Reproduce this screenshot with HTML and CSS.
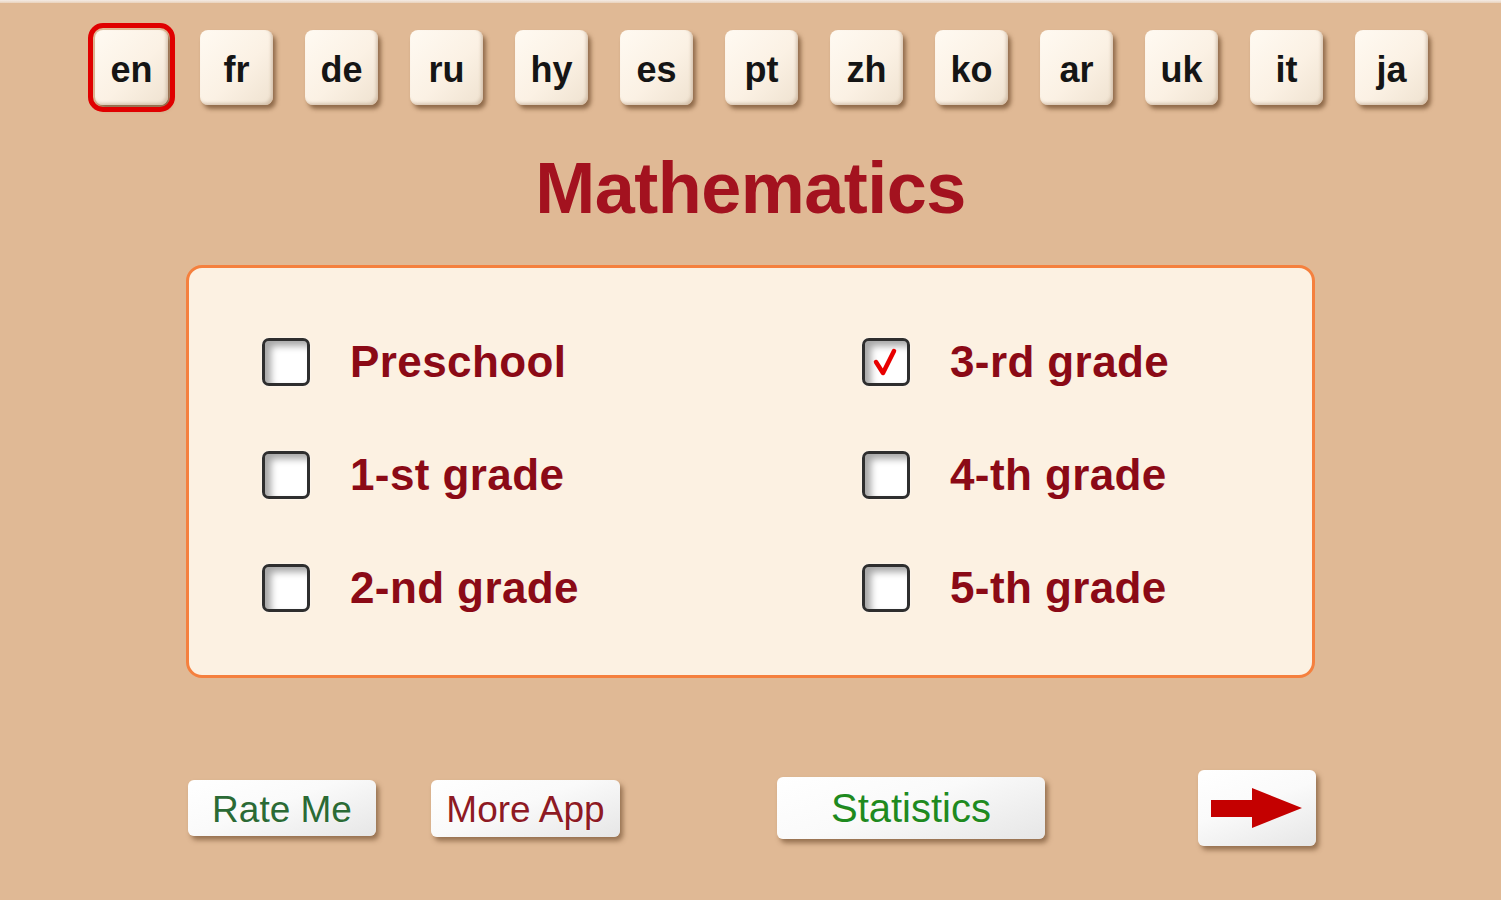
FILE: index.html
```html
<!DOCTYPE html>
<html lang="en">
<head>
<meta charset="utf-8">
<title>Mathematics</title>
<link rel="stylesheet" href="styles.css">
</head>
<body>
<div class="topbar"></div>
<div class="langs">
  <button class="lang active">en</button>
  <button class="lang">fr</button>
  <button class="lang">de</button>
  <button class="lang">ru</button>
  <button class="lang">hy</button>
  <button class="lang">es</button>
  <button class="lang">pt</button>
  <button class="lang">zh</button>
  <button class="lang">ko</button>
  <button class="lang">ar</button>
  <button class="lang">uk</button>
  <button class="lang">it</button>
  <button class="lang">ja</button>
</div>
<h1 class="title">Mathematics</h1>
<div class="panel">
  <div class="grades">
    <div class="grade"><span class="box"></span><span class="label">Preschool</span></div>
    <div class="grade"><span class="box"><svg viewBox="0 0 42 42" width="42" height="42"><polyline points="11,21 18,32 29,10" fill="none" stroke="#e80000" stroke-width="4.5" stroke-linecap="round" stroke-linejoin="round"/></svg></span><span class="label">3-rd grade</span></div>
    <div class="grade"><span class="box"></span><span class="label">1-st grade</span></div>
    <div class="grade"><span class="box"></span><span class="label">4-th grade</span></div>
    <div class="grade"><span class="box"></span><span class="label">2-nd grade</span></div>
    <div class="grade"><span class="box"></span><span class="label">5-th grade</span></div>
  </div>
</div>
<div class="actions">
  <button class="btn rate">Rate Me</button>
  <button class="btn more">More App</button>
  <button class="btn stats">Statistics</button>
  <button class="btn next"><svg viewBox="0 0 118 76" width="118" height="76"><polygon points="13,30 54,30 54,18 104,38 54,58 54,47 13,47" fill="#c40000"/></svg></button>
</div>
</body>
</html>
```
FILE: styles.css
```css
html, body {
  margin: 0;
  padding: 0;
}
body {
  background: #e0b995;
  width: 1501px;
  height: 900px;
  overflow: hidden;
  font-family: "Liberation Sans", Arial, sans-serif;
}
.topbar {
  height: 3px;
  background: linear-gradient(#f4ece6, #ead2bc);
}
.langs {
  display: flex;
  gap: 32px;
  padding: 27px 0 0 95px;
}
.lang {
  width: 73px;
  height: 75px;
  padding: 0;
  border: none;
  border-radius: 8px;
  background: linear-gradient(135deg, #fffaf2 0%, #fbf1e4 55%, #efe2d0 100%);
  box-shadow: 3px 4px 4px rgba(90, 55, 25, 0.6), inset -2px -2px 3px rgba(160, 130, 100, 0.35);
  font-family: "Liberation Sans", Arial, sans-serif;
  font-weight: bold;
  font-size: 36px;
  color: #151515;
  line-height: 80px;
}
.lang.active {
  outline: 5px solid #e00000;
  outline-offset: 2px;
}
.title {
  margin: 47px 0 0 0;
  text-align: center;
  font-size: 72px;
  line-height: 72px;
  font-weight: bold;
  color: #a3121f;
  letter-spacing: -0.5px;
}
.panel {
  box-sizing: border-box;
  width: 1129px;
  height: 413px;
  margin: 41px 0 0 186px;
  border: 3px solid #f5803e;
  border-radius: 16px;
  background: #fcf1e2;
  padding: 70px 0 0 73px;
}
.grades {
  display: grid;
  grid-template-columns: 600px auto;
  row-gap: 65px;
}
.grade {
  display: flex;
  align-items: center;
  gap: 40px;
  height: 48px;
}
.box {
  box-sizing: border-box;
  width: 48px;
  height: 48px;
  border: 3px solid #2e2e2e;
  border-radius: 7px;
  background: #ffffff;
  box-shadow: inset 6px 5px 7px rgba(0, 0, 0, 0.35), 0 0 2px rgba(255, 255, 255, 0.9);
  display: flex;
  align-items: center;
  justify-content: center;
}
.label {
  font-size: 44px;
  line-height: 50px;
  font-weight: bold;
  color: #8b0a16;
  letter-spacing: 0.4px;
}
.actions {
  display: flex;
  align-items: center;
  height: 80px;
  margin-top: 90px;
  padding-left: 188px;
}
.btn {
  padding: 0;
  border: none;
  border-radius: 6px;
  background: linear-gradient(160deg, #ffffff 0%, #fafafa 45%, #e6e6e6 100%);
  box-shadow: 3px 4px 5px rgba(90, 55, 25, 0.55);
  font-family: "Liberation Sans", Arial, sans-serif;
  font-size: 37px;
  line-height: 60px;
  text-shadow: 0 0 2px rgba(255, 255, 255, 0.9);
}
.rate {
  width: 188px;
  height: 56px;
  color: #2b6a35;
}
.more {
  width: 189px;
  height: 57px;
  margin-left: 55px;
  color: #8e1a24;
}
.stats {
  width: 268px;
  height: 62px;
  margin-left: 157px;
  color: #1f8a1f;
  font-size: 40px;
}
.next {
  width: 118px;
  height: 76px;
  margin-left: 153px;
  display: flex;
}
.next svg {
  display: block;
}
```
